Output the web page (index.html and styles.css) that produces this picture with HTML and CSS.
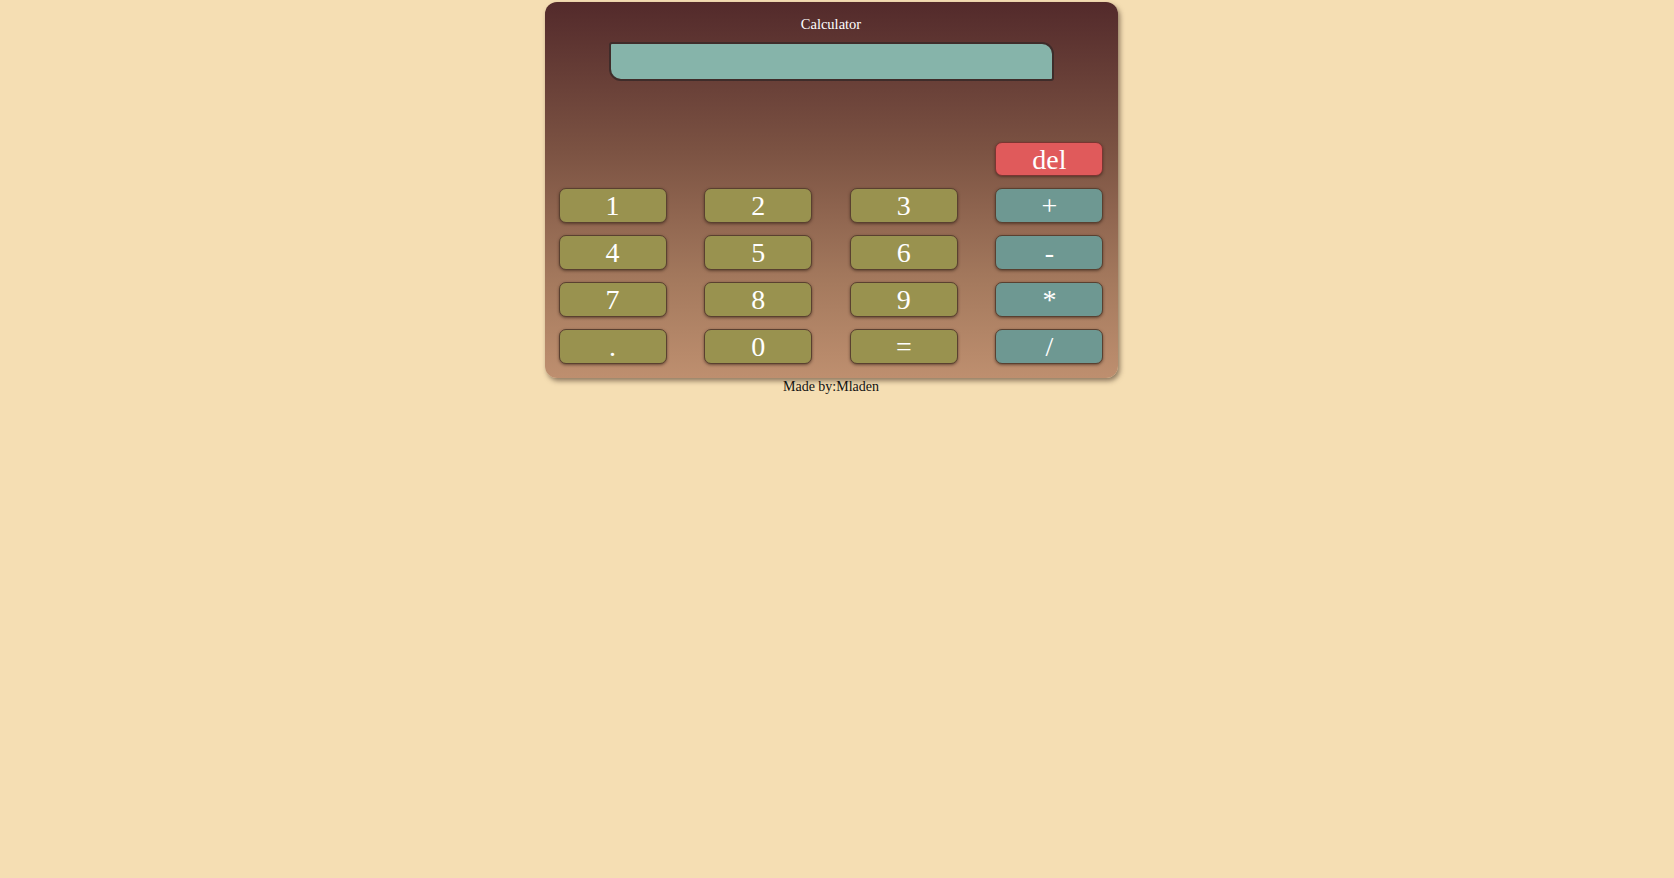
FILE: index.html
```html
<!DOCTYPE html>
<html>
<head>
<meta charset="utf-8">
<title>Calculator</title>
<link rel="stylesheet" href="styles.css">
</head>
<body>
<div class="page">
  <div class="calc">
    <div class="title">Calculator</div>
    <div class="display"></div>
    <div class="keys">
      <div class="key del">del</div>
      <div class="key num">1</div>
      <div class="key num">2</div>
      <div class="key num">3</div>
      <div class="key op">+</div>
      <div class="key num">4</div>
      <div class="key num">5</div>
      <div class="key num">6</div>
      <div class="key op">-</div>
      <div class="key num">7</div>
      <div class="key num">8</div>
      <div class="key num">9</div>
      <div class="key op">*</div>
      <div class="key num">.</div>
      <div class="key num">0</div>
      <div class="key num">=</div>
      <div class="key op">/</div>
    </div>
  </div>
  <div class="footer">Made by:Mladen</div>
</div>
</body>
</html>
```
FILE: styles.css
```css
html, body {
  margin: 0;
  padding: 0;
  background: #f5deb3;
  font-family: "Liberation Serif", "Times New Roman", serif;
}
.page {
  padding: 2px 12px 0 0;
  display: flex;
  flex-direction: column;
  align-items: center;
}
.calc {
  box-sizing: border-box;
  width: 573px;
  height: 376px;
  padding: 13px 14px 13px 14px;
  border-radius: 12px;
  background: linear-gradient(to bottom, #532a2b 0%, #7c5343 40%, #a57a5e 75%, #be8f6f 100%);
  box-shadow: 2px 3px 5px rgba(60, 40, 30, 0.55);
  display: flex;
  flex-direction: column;
  align-items: center;
}
.title {
  color: #fff;
  font-size: 14.5px;
  line-height: 19px;
  height: 19px;
}
.display {
  box-sizing: border-box;
  width: 445px;
  height: 39px;
  margin-top: 8px;
  background: #86b4aa;
  border: 2px solid #3f2c2a;
  border-radius: 3px 12px 3px 12px;
}
.keys {
  margin-top: 61px;
  align-self: stretch;
  display: grid;
  grid-template-columns: repeat(4, 108px);
  grid-template-rows: 34px;
  grid-auto-rows: 35px;
  justify-content: space-between;
  row-gap: 12px;
}
.key {
  box-sizing: border-box;
  display: flex;
  align-items: center;
  justify-content: center;
  color: #fff;
  font-size: 28px;
  line-height: 1;
  border: 1px solid #5a4030;
  border-radius: 7px;
  box-shadow: 0 1px 3px rgba(50, 30, 20, 0.6);
  padding-top: 1px;
}
.num {
  background: #99924f;
}
.op {
  background: #6e9892;
}
.del {
  grid-column: 4;
  background: #e05a5b;
  border-color: #7a3632;
}
.footer {
  font-size: 14px;
  line-height: 16px;
  margin-top: 1px;
  color: #111;
}
```
